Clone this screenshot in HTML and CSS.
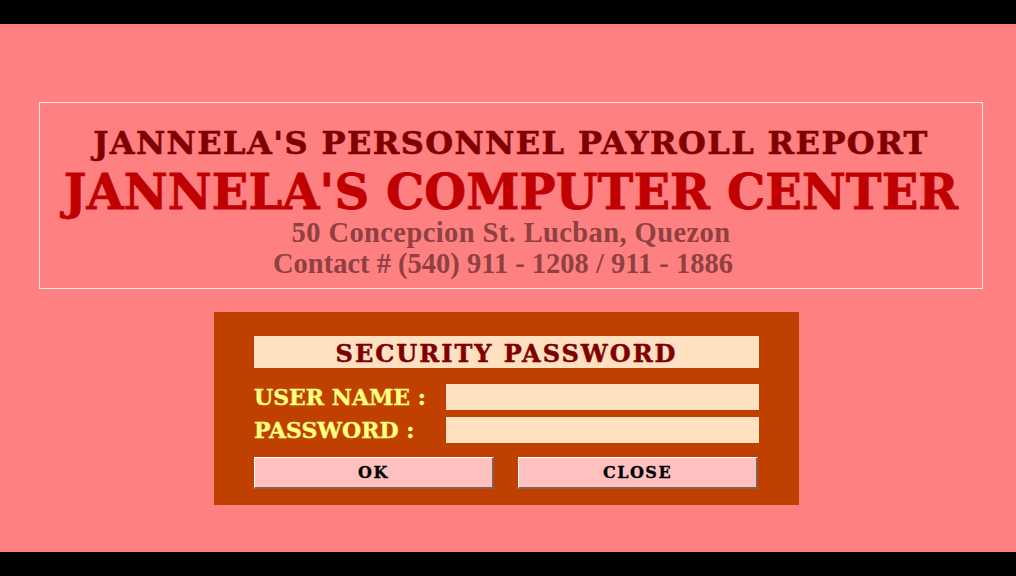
FILE: index.html
```html
<!DOCTYPE html>
<html>
<head>
<meta charset="utf-8">
<title>Jannela's Personnel Payroll Report</title>
<link rel="stylesheet" href="styles.css">
</head>
<body>
<div class="bar"></div>
<main class="stage">
  <section class="header">
    <div class="h1">JANNELA'S PERSONNEL PAYROLL REPORT</div>
    <div class="h2">JANNELA'S COMPUTER CENTER</div>
    <div class="addr a1">50 Concepcion St. Lucban, Quezon</div>
    <div class="addr a2">Contact # (540) 911 - 1208 / 911 - 1886</div>
  </section>
  <section class="panel">
    <div class="ptitle">SECURITY PASSWORD</div>
    <div class="row">
      <label class="lbl">USER NAME :</label>
      <input class="field" type="text">
    </div>
    <div class="row">
      <label class="lbl">PASSWORD :</label>
      <input class="field" type="password">
    </div>
    <div class="buttons">
      <button class="btn">OK</button>
      <button class="btn">CLOSE</button>
    </div>
  </section>
</main>
<div class="bar"></div>
</body>
</html>
```
FILE: styles.css
```css
html, body {
  margin: 0;
  padding: 0;
}
body {
  width: 1016px;
  height: 576px;
  background: #ff8080;
  display: flex;
  flex-direction: column;
  overflow: hidden;
}
.bar {
  height: 24px;
  background: #000;
  flex: none;
}
.stage {
  flex: 1;
  display: flex;
  flex-direction: column;
  align-items: flex-start;
}
.header {
  margin: 78px 0 0 39px;
  width: 942px;
  height: 185px;
  border: 1px solid #ffe8e8;
  display: flex;
  flex-direction: column;
  align-items: center;
  box-sizing: content-box;
}
.h1 {
  font-family: "DejaVu Serif", serif;
  font-weight: bold;
  font-size: 32px;
  letter-spacing: 1.4px;
  -webkit-text-stroke: 0.6px #800000;
  color: #800000;
  line-height: 36px;
  margin-top: 22px;
  white-space: nowrap;
}
.h2 {
  font-family: "DejaVu Serif", serif;
  font-weight: bold;
  font-size: 48px;
  letter-spacing: 0.1px;
  -webkit-text-stroke: 0.8px #c00000;
  color: #c00000;
  line-height: 50px;
  margin-top: 6px;
  white-space: nowrap;
}
.addr {
  font-family: "Liberation Serif", serif;
  font-weight: bold;
  font-size: 28.5px;
  color: #904040;
  line-height: 31px;
  white-space: nowrap;
}
.a1 {
  margin-top: 0;
  letter-spacing: 0.4px;
}
.a2 {
  margin-right: 16px;
}
.panel {
  margin: 23px 0 0 214px;
  width: 505px;
  height: 169px;
  padding: 24px 40px 0 40px;
  background: #c04000;
  display: flex;
  flex-direction: column;
}
.ptitle {
  height: 32px;
  background: #ffe0c0;
  color: #800000;
  font-family: "DejaVu Serif", serif;
  font-weight: bold;
  font-size: 24px;
  letter-spacing: 2px;
  -webkit-text-stroke: 0.5px #800000;
  line-height: 35px;
  text-align: center;
  margin-bottom: 16px;
}
.row {
  display: flex;
  align-items: center;
  height: 26px;
  margin-bottom: 7px;
}
.row + .row {
  margin-bottom: 14px;
}
.lbl {
  width: 192px;
  flex: none;
  color: #ffff80;
  font-family: "DejaVu Serif", serif;
  font-weight: bold;
  font-size: 22px;
  -webkit-text-stroke: 0.4px #ffff80;
  white-space: nowrap;
}
.field {
  flex: 1;
  height: 26px;
  border: none;
  background: #ffe0c0;
  margin: 0;
  padding: 0 4px;
  box-sizing: border-box;
  outline: none;
}
.buttons {
  display: flex;
  gap: 24px;
}
.btn {
  width: 240px;
  height: 32px;
  margin: 0;
  padding: 0;
  background: #ffc0c0;
  border-style: solid;
  border-width: 1px 2px 2px 1px;
  border-color: #ffffff #806058 #806058 #ffffff;
  font-family: "DejaVu Serif", serif;
  font-weight: bold;
  font-size: 16px;
  color: #000;
  letter-spacing: 1.5px;
  -webkit-text-stroke: 0.3px #000;
}
```
